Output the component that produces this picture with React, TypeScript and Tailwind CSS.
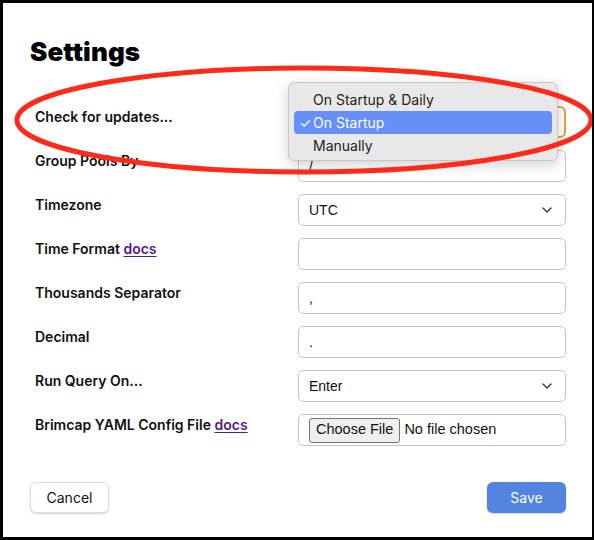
import React from "react";

function Chevron() {
  return (
    <svg width="10" height="6" viewBox="0 0 10 6" className="shrink-0">
      <polyline points="1,1 5,5 9,1" fill="none" stroke="#333" strokeWidth="1.4" strokeLinecap="round" strokeLinejoin="round" />
    </svg>
  );
}

function Label({ children }: { children: React.ReactNode }) {
  return <div className="pt-px text-[14px] leading-5 font-semibold text-[#111]">{children}</div>;
}

function Docs() {
  return <span className="text-[#551a8b] underline underline-offset-2">docs</span>;
}

const field = "w-[268px] h-8 rounded-[5px] border border-[#c6c6c6] bg-white flex items-center px-[10px] font-['Liberation_Sans'] text-[14px] text-[#111]";

function SelectBox({ value, focused }: { value: string; focused?: boolean }) {
  return (
    <div className={focused ? "w-[268px] h-8 rounded-[6px] border-2 border-[#e3a33a] bg-white flex items-center justify-between pl-[10px] pr-[13px] font-['Liberation_Sans'] text-[14px] text-[#111]" : "w-[268px] h-8 rounded-[5px] border border-[#c6c6c6] bg-white flex items-center justify-between pl-[10px] pr-[13px] font-['Liberation_Sans'] text-[14px] text-[#111]"}>
      <span>{value}</span>
      <Chevron />
    </div>
  );
}

function Row({ label, children }: { label: React.ReactNode; children: React.ReactNode }) {
  return (
    <div className="flex justify-between items-start">
      <Label>{label}</Label>
      {children}
    </div>
  );
}

export default function App() {
  return (
    <div className="w-[595px] h-[540px] bg-white">
      <div className="relative w-[594px] h-[540px] border-[3px] border-r-2 border-black bg-white font-['Inter'] overflow-hidden">
        <h1 className="ml-[27px] mt-[33px] text-[26px] leading-8 font-black text-black tracking-[0.1px]">Settings</h1>
        <div className="mt-[38px] flex flex-col gap-3 pl-[32px] pr-[26px]">
          <Row label="Check for updates...">
            <SelectBox value="" focused />
          </Row>
          <Row label="Group Pools By">
            <div className={field}>/</div>
          </Row>
          <Row label="Timezone">
            <SelectBox value="UTC" />
          </Row>
          <Row label={<>Time Format <Docs /></>}>
            <div className={field}></div>
          </Row>
          <Row label="Thousands Separator">
            <div className={field}>,</div>
          </Row>
          <Row label="Decimal">
            <div className={field}>.</div>
          </Row>
          <Row label="Run Query On...">
            <SelectBox value="Enter" />
          </Row>
          <Row label={<>Brimcap YAML Config File <Docs /></>}>
            <div className="w-[268px] h-8 rounded-[5px] border border-[#c6c6c6] bg-white flex items-center px-[10px] font-['Liberation_Sans'] text-[14.5px] text-[#111]">
              <span className="h-[25px] px-[6px] flex items-center rounded-[3px] border border-[#767676] bg-[#efefef]">Choose File</span>
              <span className="ml-[4px]">No file chosen</span>
            </div>
          </Row>
        </div>
        <div className="mt-9 flex justify-between pl-[27px] pr-[26px]">
          <button className="w-[79px] h-[31px] rounded-[6px] border border-[#dcdcdc] bg-white shadow-[0_1px_2px_rgba(0,0,0,0.18)] text-[14px] text-[#111]">Cancel</button>
          <button className="w-[79px] h-[31px] rounded-[6px] bg-[#5283de] shadow-[0_1px_2px_rgba(0,0,0,0.2)] text-[14px] text-white">Save</button>
        </div>

        <div className="absolute left-[285px] top-[79px] w-[270px] h-[79px] rounded-[6px] border border-[#c8c8c8] bg-[#e8e8e8] shadow-[0_4px_14px_rgba(0,0,0,0.18)] py-[5px] px-[5px] text-[14px] text-[#222]">
          <div className="h-[23px] flex items-center pl-[19px]">On Startup &amp; Daily</div>
          <div className="h-[23px] flex items-center rounded-[4px] bg-[#6690f7] text-white pl-[5px]">
            <span className="w-[14px] text-[14px] leading-none">✓</span>
            <span>On Startup</span>
          </div>
          <div className="h-[23px] flex items-center pl-[19px]">Manually</div>
        </div>

        <svg className="absolute -left-[3px] -top-[3px] pointer-events-none" width="595" height="540" viewBox="0 0 595 540">
          <ellipse cx="304" cy="120" rx="287" ry="52" fill="none" stroke="#ff2a1a" strokeWidth="5" />
        </svg>
      </div>
    </div>
  );
}
